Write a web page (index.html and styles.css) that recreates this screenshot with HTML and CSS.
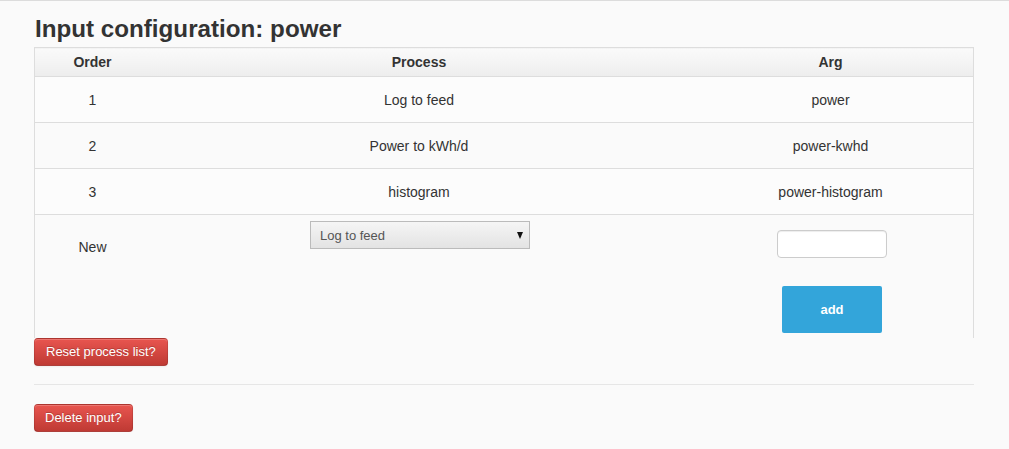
FILE: index.html
```html
<!DOCTYPE html>
<html>
<head>
<meta charset="utf-8">
<link rel="stylesheet" href="styles.css">
</head>
<body>
<div class="topline"></div>
<div class="page">
  <h2 class="title">Input configuration: power</h2>
  <table class="proc-table">
    <thead>
      <tr>
        <th class="col-order">Order</th>
        <th class="col-process">Process</th>
        <th class="col-arg">Arg</th>
      </tr>
    </thead>
    <tbody>
      <tr class="row odd"><td>1</td><td>Log to feed</td><td>power</td></tr>
      <tr class="row"><td>2</td><td>Power to kWh/d</td><td>power-kwhd</td></tr>
      <tr class="row odd"><td>3</td><td>histogram</td><td>power-histogram</td></tr>
      <tr class="new-row">
        <td class="new-label">New</td>
        <td class="new-process">
          <div class="select-wrap">
            <select class="select">
              <option>Log to feed</option>
            </select>
            <span class="select-arrow"></span>
          </div>
        </td>
        <td class="new-arg">
          <input class="text-input" type="text">
          <button class="btn-add">add</button>
        </td>
      </tr>
    </tbody>
  </table>
  <button class="btn-danger btn-reset">Reset process list?</button>
  <hr class="divider">
  <button class="btn-danger">Delete input?</button>
</div>
</body>
</html>
```

FILE: styles.css
```css
html, body {
  margin: 0;
  padding: 0;
}
body {
  background: #fafafa;
  font-family: "Liberation Sans", Arial, sans-serif;
  color: #333;
  font-size: 14px;
}
.topline {
  height: 1px;
  background: #dcdcdc;
}
.page {
  width: 940px;
  padding-left: 34px;
}
.title {
  margin: 13px 0 3px 1px;
  font-size: 24.2px;
  line-height: 30px;
  font-weight: bold;
  color: #333;
}
.proc-table {
  width: 940px;
  border-collapse: collapse;
  table-layout: fixed;
  border-left: 1px solid #dddddd;
  border-right: 1px solid #dddddd;
}
.proc-table th {
  height: 28px;
  padding: 0;
  font-size: 14px;
  font-weight: bold;
  text-align: center;
  border-top: 1px solid #dddddd;
  border-bottom: 1px solid #dddddd;
  background: linear-gradient(to bottom, #fafafa, #ededed);
}
.col-order { width: 115px; }
.col-process { width: 538px; }
.col-arg { width: 285px; }
.row td {
  height: 45px;
  padding: 0;
  text-align: center;
  vertical-align: middle;
  border-bottom: 1px solid #dddddd;
  font-size: 14px;
  line-height: 20px;
}
.row.odd td {
  background: #fcfcfc;
}
.new-row {
  height: 123px;
}
.new-row td {
  padding: 0;
  vertical-align: top;
  text-align: center;
}
.new-row td.new-label {
  padding-top: 23px;
  line-height: 18px;
}
.new-row td.new-process {
  padding-top: 6px;
}
.select-wrap {
  position: relative;
  width: 220px;
  height: 28px;
  margin-left: 160px;
}
.select {
  appearance: none;
  -webkit-appearance: none;
  display: block;
  width: 220px;
  height: 28px;
  margin: 0;
  padding: 0 0 0 9px;
  border: 1px solid #bbbbbb;
  border-radius: 0;
  background: linear-gradient(to bottom, #f5f5f5, #e3e3e3);
  font-family: "Liberation Sans", Arial, sans-serif;
  font-size: 13px;
  color: #555;
  text-align: left;
}
.select-arrow {
  position: absolute;
  right: 7px;
  top: 11px;
  width: 0;
  height: 0;
  border-left: 3.5px solid transparent;
  border-right: 3.5px solid transparent;
  border-top: 7px solid #111;
}
.new-row td.new-arg {
  padding-top: 15px;
}
.text-input {
  display: block;
  box-sizing: border-box;
  width: 110px;
  height: 28px;
  margin: 0 0 28px 89px;
  padding: 4px 6px;
  border: 1px solid #cccccc;
  border-radius: 4px;
  background: #fff;
  box-shadow: inset 0 1px 1px rgba(0, 0, 0, 0.075);
}
.btn-add {
  display: block;
  width: 100px;
  height: 47px;
  margin: 0 0 0 94px;
  border: none;
  border-radius: 2px;
  background: #33a5da;
  color: #fff;
  font-family: "Liberation Sans", Arial, sans-serif;
  font-size: 13px;
  font-weight: bold;
}
.btn-danger {
  display: block;
  box-sizing: border-box;
  height: 28px;
  margin: 0;
  padding: 4px 10px;
  border: 1px solid;
  border-color: rgba(0, 0, 0, 0.1) rgba(0, 0, 0, 0.1) rgba(0, 0, 0, 0.25);
  border-radius: 4px;
  background: linear-gradient(to bottom, #e8554f, #bf3a34);
  color: #fff;
  font-family: "Liberation Sans", Arial, sans-serif;
  font-size: 13px;
  line-height: 18px;
  text-shadow: 0 -1px 0 rgba(0, 0, 0, 0.2);
  box-shadow: inset 0 1px 0 rgba(255, 255, 255, 0.2), 0 1px 2px rgba(0, 0, 0, 0.05);
}
.btn-reset {
  padding: 4px 11px;
}
.divider {
  width: 940px;
  margin: 18px 0 19px 0;
  border: 0;
  border-top: 1px solid #e6e6e6;
  height: 0;
}
```
